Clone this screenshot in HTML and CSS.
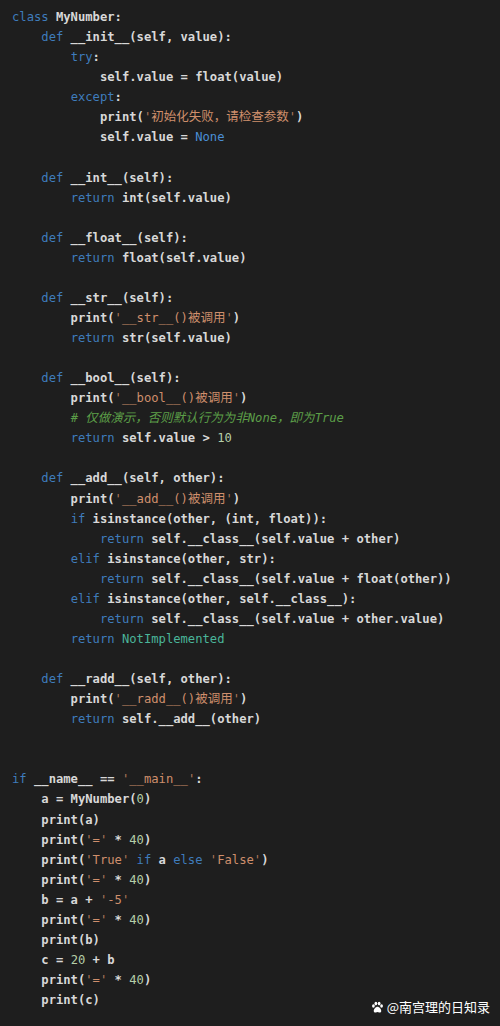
FILE: index.html
```html
<!DOCTYPE html>
<html lang="zh">
<head>
<meta charset="utf-8">
<title>MyNumber</title>
<link rel="stylesheet" href="styles.css">
</head>
<body>
<div class="screen">
<pre class="code"><span class="kw">class</span> MyNumber:
    <span class="kw">def</span> __init__(self, value):
        <span class="kw">try</span>:
            self.value = float(value)
        <span class="kw">except</span>:
            print(<span class="q">'</span><span class="str zh">初始化失败，请检查参数</span><span class="q">'</span>)
            self.value = <span class="const">None</span>

    <span class="kw">def</span> __int__(self):
        <span class="kw">return</span> int(self.value)

    <span class="kw">def</span> __float__(self):
        <span class="kw">return</span> float(self.value)

    <span class="kw">def</span> __str__(self):
        print(<span class="q">'</span><span class="str">__str__()</span><span class="str zh">被调用</span><span class="q">'</span>)
        <span class="kw">return</span> str(self.value)

    <span class="kw">def</span> __bool__(self):
        print(<span class="q">'</span><span class="str">__bool__()</span><span class="str zh">被调用</span><span class="q">'</span>)
        <span class="cm"># <span class="zh">仅做演示，否则默认行为为非</span>None<span class="zh">，即为</span>True</span>
        <span class="kw">return</span> self.value &gt; <span class="num">10</span>

    <span class="kw">def</span> __add__(self, other):
        print(<span class="q">'</span><span class="str">__add__()</span><span class="str zh">被调用</span><span class="q">'</span>)
        <span class="kw">if</span> isinstance(other, (int, float)):
            <span class="kw">return</span> self.__class__(self.value + other)
        <span class="kw">elif</span> isinstance(other, str):
            <span class="kw">return</span> self.__class__(self.value + float(other))
        <span class="kw">elif</span> isinstance(other, self.__class__):
            <span class="kw">return</span> self.__class__(self.value + other.value)
        <span class="kw">return</span> <span class="cls">NotImplemented</span>

    <span class="kw">def</span> __radd__(self, other):
        print(<span class="q">'</span><span class="str">__radd__()</span><span class="str zh">被调用</span><span class="q">'</span>)
        <span class="kw">return</span> self.__add__(other)


<span class="kw">if</span> __name__ == <span class="q">'</span><span class="str">__main__</span><span class="q">'</span>:
    a = MyNumber(<span class="num">0</span>)
    print(a)
    print(<span class="q">'</span><span class="str">=</span><span class="q">'</span> * <span class="num">40</span>)
    print(<span class="q">'</span><span class="str">True</span><span class="q">'</span> <span class="kw">if</span> a <span class="kw">else</span> <span class="q">'</span><span class="str">False</span><span class="q">'</span>)
    print(<span class="q">'</span><span class="str">=</span><span class="q">'</span> * <span class="num">40</span>)
    b = a + <span class="q">'</span><span class="str">-5</span><span class="q">'</span>
    print(<span class="q">'</span><span class="str">=</span><span class="q">'</span> * <span class="num">40</span>)
    print(b)
    c = <span class="num">20</span> + b
    print(<span class="q">'</span><span class="str">=</span><span class="q">'</span> * <span class="num">40</span>)
    print(c)</pre>
<div class="mark">
<svg class="paw" viewBox="0 0 16 16" width="13" height="13" aria-hidden="true">
<ellipse cx="3" cy="6.2" rx="1.7" ry="2.1" fill="#fff"/>
<ellipse cx="6" cy="3.2" rx="1.7" ry="2.2" fill="#fff"/>
<ellipse cx="10" cy="3.2" rx="1.7" ry="2.2" fill="#fff"/>
<ellipse cx="13" cy="6.2" rx="1.7" ry="2.1" fill="#fff"/>
<path d="M8 7.2c-2.2 0-4.6 3-4.6 5.2 0 1.6 1.5 2.1 2.5 1.8 0.9-0.3 1.4-0.6 2.1-0.6s1.2 0.3 2.1 0.6c1 0.3 2.5-0.2 2.5-1.8 0-2.2-2.4-5.2-4.6-5.2z" fill="#fff"/>
</svg>
<span class="mark-text">@南宫理的日知录</span>
</div>
</div>
</body>
</html>
```

FILE: styles.css
```css
html, body {
  margin: 0;
  padding: 0;
  background: #1e1e1e;
}

.screen {
  position: relative;
  width: 500px;
  height: 1026px;
  background: #1e1e1e;
  overflow: hidden;
}

.code {
  margin: 0;
  padding: 7px 0 0 12px;
  font-family: "DejaVu Sans Mono", "Noto Sans CJK SC", monospace;
  font-size: 12.18px;
  font-weight: bold;
  line-height: 20.06px;
  color: #d8d8d8;
  white-space: pre;
}

.zh {
  font-family: "Noto Sans CJK SC", sans-serif;
  font-size: 12.5px;
  font-weight: normal;
  line-height: 1;
}

.kw {
  color: #3f7cbc;
  font-weight: normal;
}

.const {
  color: #4a8fd6;
  font-weight: normal;
}

.cls {
  color: #4ab59a;
  font-weight: normal;
}

.str {
  color: #cf8f6c;
  font-weight: normal;
}

.q {
  color: #b07a5c;
  font-weight: normal;
}

.num {
  color: #b5cea8;
  font-weight: normal;
}

.cm {
  color: #5c9e48;
  font-style: italic;
  font-weight: normal;
}

.cm .zh {
  font-style: italic;
}

.mark {
  position: absolute;
  right: 10px;
  bottom: 11px;
  display: flex;
  align-items: center;
  gap: 3px;
  color: #ffffff;
  font-family: "Noto Sans CJK SC", sans-serif;
  font-size: 13px;
  line-height: 16px;
}

.paw {
  display: block;
}
```
